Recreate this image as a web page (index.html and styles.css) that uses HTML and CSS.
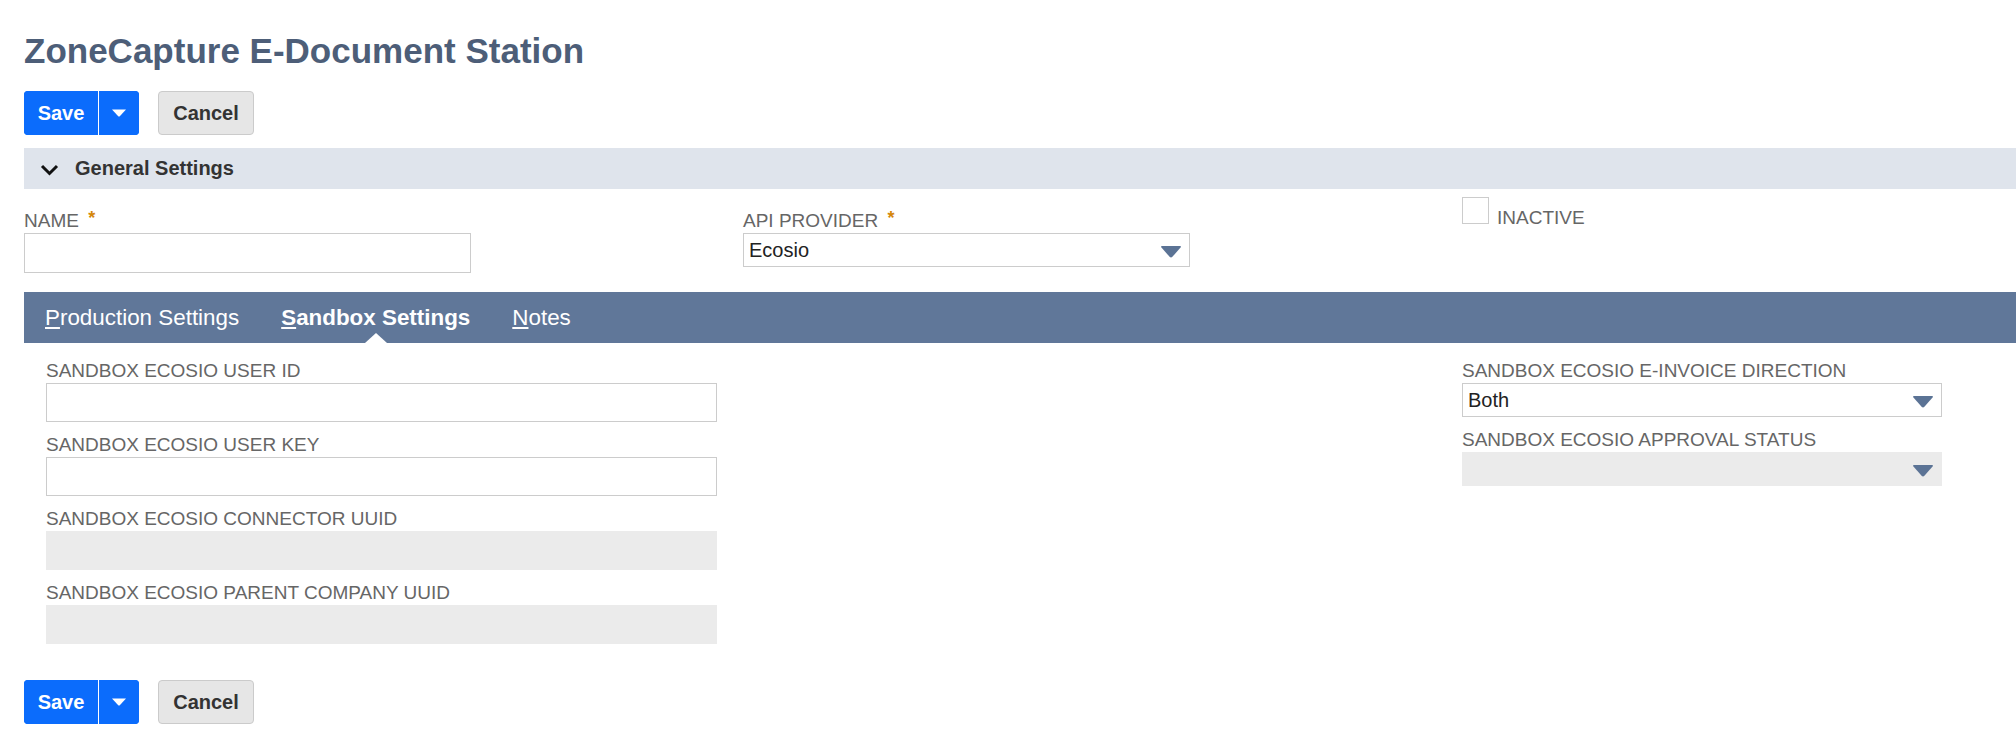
FILE: index.html
```html
<html>
    <head>
        <title>ZoneCapture E-Document Station</title>
        <link rel="stylesheet" href="styles.css">
    </head>
    <body>
        <div class="page">
            <h1 class="page-title">ZoneCapture E-Document Station</h1>

            <!-- top buttons -->
            <div class="actions">
                <div class="btn-split">
                    <button class="btn-save">Save</button>
                    <button class="btn-more">
                        <svg width="14" height="8" viewBox="0 0 14 8"><path d="M0 0.5 H14 L8 7 Q7 8 6 7 Z" fill="#fff"/></svg>
                    </button>
                </div>
                <button class="btn-cancel">Cancel</button>
            </div>

            <div class="section-head">
                <svg class="chevron" width="19" height="12" viewBox="0 0 19 12"><polyline points="2,2 9.5,9.5 17,2" fill="none" stroke="#111" stroke-width="3"/></svg>
                General Settings
            </div>

            <div class="main-fields">
                <div class="field pad-top">
                    <div class="field-label">NAME <span class="req">*</span></div>
                    <input class="text-input name-input" type="text">
                </div>
                <div class="field pad-top">
                    <div class="field-label">API PROVIDER <span class="req">*</span></div>
                    <div class="select provider-select">
                        <span>Ecosio</span>
                        <svg class="select-arrow" width="20" height="12" viewBox="0 0 20 12"><path d="M0 1 Q0 0 1 0 H19 Q20 0 20 1 L11.4 10.8 Q10 12.3 8.6 10.8 Z" fill="#5b7395"/></svg>
                    </div>
                </div>
                <div class="field">
                    <label class="check"><span class="check-box"></span><span class="check-text">INACTIVE</span></label>
                </div>
            </div>

            <!-- subtabs -->
            <div class="tabs">
                <a class="tab"><u>P</u>roduction Settings</a>
                <a class="tab active"><u>S</u>andbox Settings</a>
                <a class="tab"><u>N</u>otes</a>
            </div>

            <div class="tab-body">
                <div class="col left-col">
                    <div class="field">
                        <div class="field-label">SANDBOX ECOSIO USER ID</div>
                        <input class="text-input wide-input" type="text">
                    </div>
                    <div class="field">
                        <div class="field-label">SANDBOX ECOSIO USER KEY</div>
                        <input class="text-input wide-input" type="text">
                    </div>
                    <div class="field">
                        <div class="field-label">SANDBOX ECOSIO CONNECTOR UUID</div>
                        <div class="text-input wide-input disabled"></div>
                    </div>
                    <div class="field">
                        <div class="field-label">SANDBOX ECOSIO PARENT COMPANY UUID</div>
                        <div class="text-input wide-input disabled"></div>
                    </div>
                </div>
                <div class="col right-col">
                    <div class="field">
                        <div class="field-label">SANDBOX ECOSIO E-INVOICE DIRECTION</div>
                        <div class="select side-select">
                            <span>Both</span>
                            <svg class="select-arrow" width="20" height="12" viewBox="0 0 20 12"><path d="M0 1 Q0 0 1 0 H19 Q20 0 20 1 L11.4 10.8 Q10 12.3 8.6 10.8 Z" fill="#5b7395"/></svg>
                        </div>
                    </div>
                    <div class="field">
                        <div class="field-label">SANDBOX ECOSIO APPROVAL STATUS</div>
                        <div class="select side-select disabled">
                            <span></span>
                            <svg class="select-arrow" width="20" height="12" viewBox="0 0 20 12"><path d="M0 1 Q0 0 1 0 H19 Q20 0 20 1 L11.4 10.8 Q10 12.3 8.6 10.8 Z" fill="#5b7395"/></svg>
                        </div>
                    </div>
                </div>
            </div>

            <!-- bottom buttons -->
            <div class="actions bottom-actions">
                <div class="btn-split">
                    <button class="btn-save">Save</button>
                    <button class="btn-more">
                        <svg width="14" height="8" viewBox="0 0 14 8"><path d="M0 0.5 H14 L8 7 Q7 8 6 7 Z" fill="#fff"/></svg>
                    </button>
                </div>
                <button class="btn-cancel">Cancel</button>
            </div>
        </div>
    </body>
</html>
```

FILE: styles.css
```css
body {
    margin: 0;
    background: #fff;
    font-family: "Liberation Sans", Arial, Helvetica, sans-serif;
    color: #333;
}

.page {
    padding-left: 24px;
}

.page-title {
    margin: 31px 0 0;
    font-size: 35px;
    line-height: 40px;
    font-weight: bold;
    color: #4d5e78;
}

/* buttons */
.actions {
    display: flex;
    gap: 19px;
    margin-top: 20px;
    height: 44px;
}

.btn-split {
    display: flex;
    background: #0b6cfc;
    border-radius: 4px;
    overflow: hidden;
}

.btn-save,
.btn-more {
    border: none;
    background: #0b6cfc;
    color: #fff;
    font-family: inherit;
    font-size: 20px;
    font-weight: bold;
    cursor: pointer;
    padding: 0;
}

.btn-save {
    width: 75px;
    border-right: 1px solid #fff;
}

.btn-more {
    width: 40px;
    display: flex;
    align-items: center;
    justify-content: center;
}

.btn-cancel {
    width: 96px;
    border: 1px solid #cbcbcb;
    border-radius: 4px;
    background: #e6e6e6;
    color: #333;
    font-family: inherit;
    font-size: 20px;
    font-weight: bold;
    cursor: pointer;
    padding: 0;
}

/* section header */
.section-head {
    display: flex;
    align-items: center;
    margin-top: 13px;
    height: 41px;
    background: #dfe4ec;
    font-size: 20px;
    font-weight: bold;
    color: #333;
}

.chevron {
    margin: 2px 16px 0 16px;
}

/* fields */
.main-fields {
    display: grid;
    grid-template-columns: 719px 719px 1fr;
    margin-top: 8px;
}

.pad-top {
    padding-top: 13px;
}

.field-label {
    height: 22px;
    font-size: 19px;
    line-height: 22px;
    color: #666;
    margin-bottom: 1px;
    white-space: nowrap;
}

.req {
    color: #d4870b;
    font-weight: bold;
    font-size: 18px;
    line-height: 0;
    vertical-align: 3px;
    margin-left: 4px;
}

.text-input {
    display: block;
    box-sizing: border-box;
    border: 1px solid #cccccc;
    background: #fff;
    margin: 0;
    padding: 0 6px;
    font-family: inherit;
    font-size: 20px;
    outline: none;
}

.name-input {
    width: 447px;
    height: 40px;
}

.wide-input {
    width: 671px;
    height: 39px;
}

.select {
    display: flex;
    align-items: center;
    justify-content: space-between;
    box-sizing: border-box;
    border: 1px solid #cccccc;
    background: #fff;
    height: 34px;
    padding: 0 8px 0 5px;
    font-size: 20px;
    color: #222;
}

.text-input.disabled,
.select.disabled {
    background: #ebebeb;
    border-color: #ebebeb;
}

.select-arrow {
    margin-top: 3px;
}

.provider-select {
    width: 447px;
}

.side-select {
    width: 480px;
}

.check {
    display: block;
    font-size: 19px;
    line-height: 22px;
    color: #666;
}

.check-box {
    display: inline-block;
    box-sizing: border-box;
    width: 27px;
    height: 27px;
    border: 1px solid #cccccc;
    background: #fff;
    margin-right: 8px;
}

/* subtabs */
.tabs {
    display: flex;
    margin-top: 19px;
    height: 51px;
    background: #607799;
}

.tab {
    position: relative;
    padding: 0 21px;
    font-size: 22.4px;
    line-height: 52px;
    color: #fff;
    cursor: pointer;
}

.tab.active {
    font-weight: bold;
}

.tab.active::after {
    content: "";
    position: absolute;
    left: 50%;
    bottom: 0;
    margin-left: -11px;
    border-left: 11px solid transparent;
    border-right: 11px solid transparent;
    border-bottom: 10px solid #fff;
}

.tab-body {
    display: grid;
    grid-template-columns: 1416px 480px;
    padding: 17px 0 0 22px;
}

.col {
    display: flex;
    flex-direction: column;
    gap: 12px;
}

.bottom-actions {
    margin-top: 36px;
}
```
